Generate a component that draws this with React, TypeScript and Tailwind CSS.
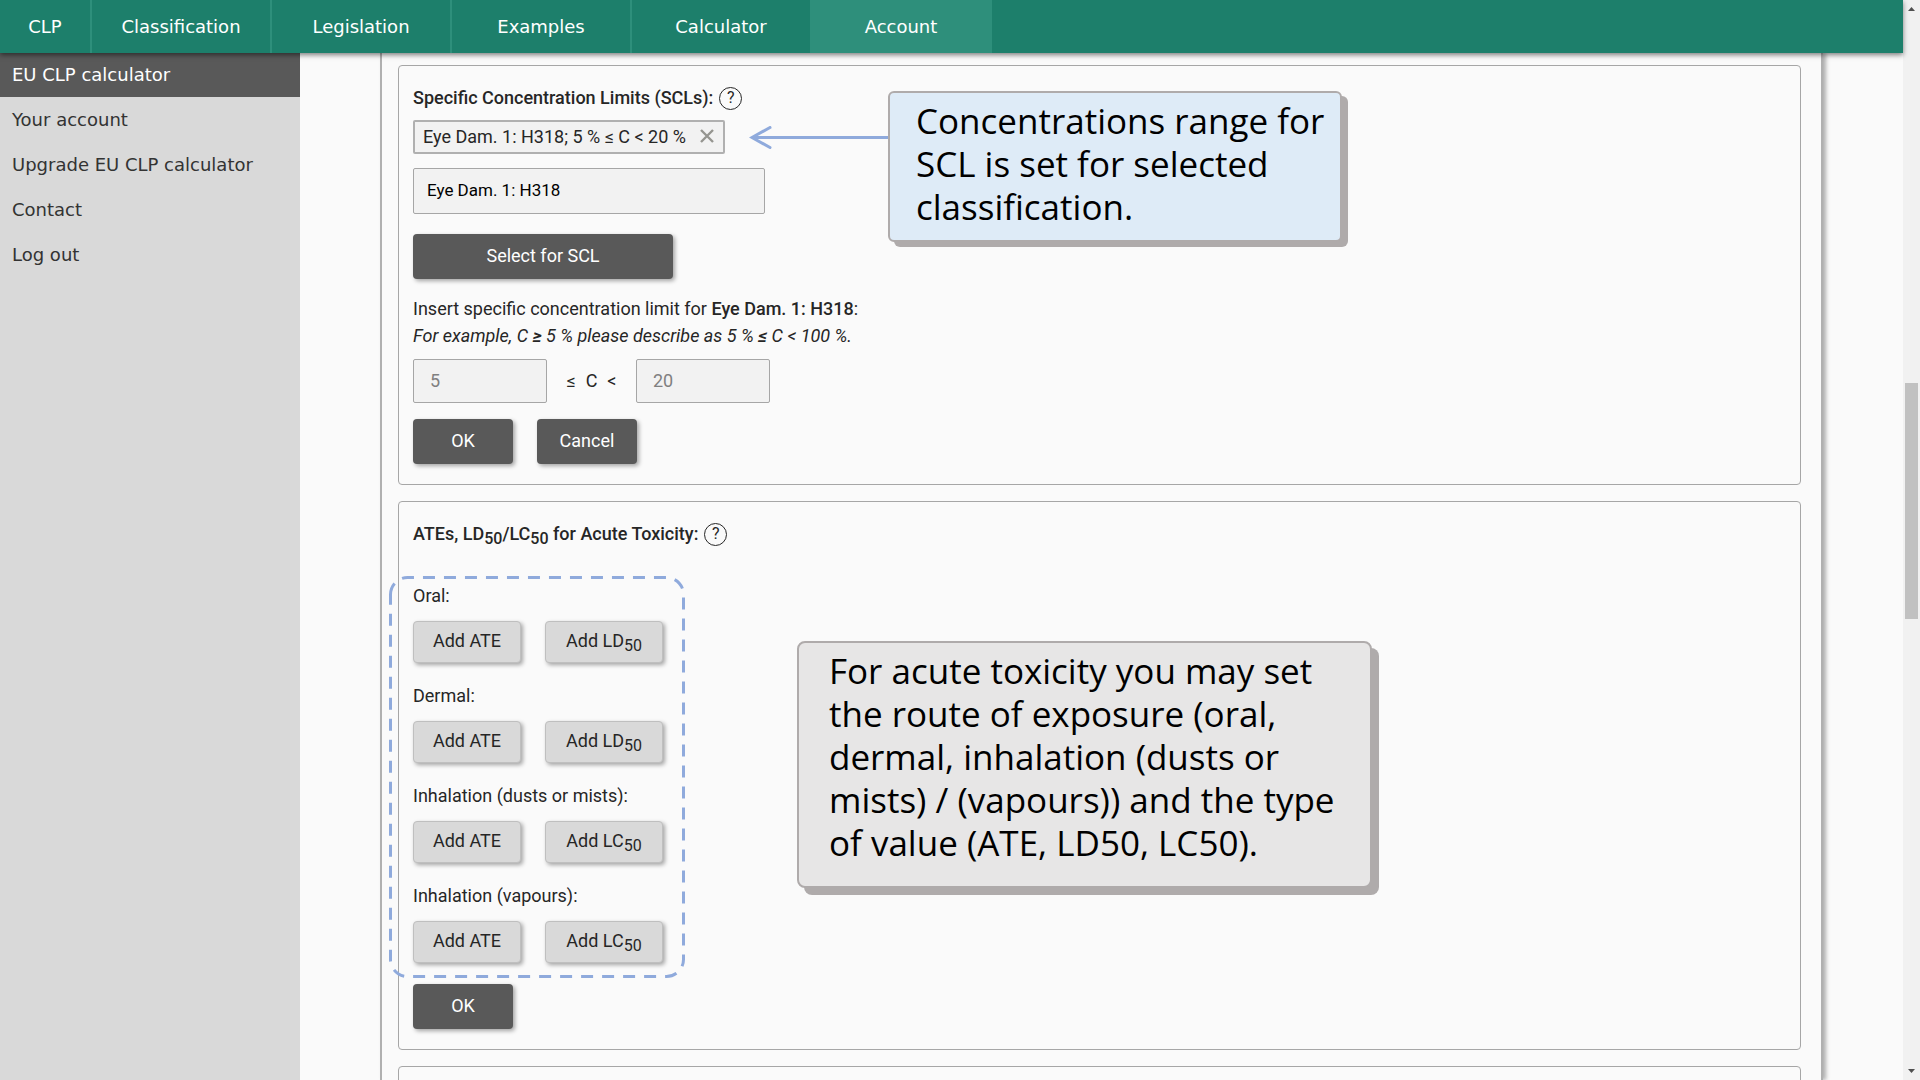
import { useState } from "react";

const navItems = ["Classification", "Legislation", "Examples", "Calculator"];

const menuItems = ["Your account", "Upgrade EU CLP calculator", "Contact", "Log out"];

const routes = [
  { name: "Oral", value: "LD" },
  { name: "Dermal", value: "LD" },
  { name: "Inhalation (dusts or mists)", value: "LC" },
  { name: "Inhalation (vapours)", value: "LC" },
];

const darkButton =
  "h-[45px] rounded bg-[#595959] pb-[2px] text-white shadow-[2px_2px_4px_rgba(0,0,0,0.35)]";
const lightButton =
  "h-[42px] rounded border border-[#bfbfbf] bg-[#d9d9d9] pb-1 shadow-[2px_2px_4px_rgba(0,0,0,0.35)]";
const field = "rounded-xs border border-[#a6a6a6] bg-[#f2f2f2]";
const callout =
  "absolute border-2 border-[#afabab] pt-1.5 font-['Trebuchet_MS','Open_Sans',sans-serif] text-[35px] leading-[43px] whitespace-nowrap text-black";

function Sub({ children }: { children: string }) {
  return <sub className="bottom-[-4px] text-base">{children}</sub>;
}

function Help() {
  return (
    <button
      type="button"
      aria-label="Help"
      className="flex size-[23px] items-center justify-center rounded-full border border-[#262626] text-base font-normal"
    >
      ?
    </button>
  );
}

function Header() {
  return (
    <header className="relative z-10 shrink-0 bg-[#1d7f6b] shadow-[0_2px_5px_rgba(0,0,0,0.5)]">
      <nav className="flex h-[53px] text-center font-['DejaVu_Sans',sans-serif] text-lg/[53px] text-white">
        <a href="#clp" className="w-[92px] border-r-2 border-[#2e8f7b]">
          CLP
        </a>
        {navItems.map((item) => (
          <a key={item} href="#nav" className="w-[180px] border-r-2 border-[#2e8f7b]">
            {item}
          </a>
        ))}
        <a href="#account" className="w-[180px] border-r-2 border-[#2e8f7b] bg-[#2e8f7b]">
          Account
        </a>
      </nav>
    </header>
  );
}

function Sidebar() {
  return (
    <aside className="w-[300px] shrink-0 bg-[#d9d9d9] font-['DejaVu_Sans',sans-serif] text-lg text-[#333333]">
      <a href="#calculator" className="flex h-11 items-center bg-[#595959] px-3 text-white">
        EU CLP calculator
      </a>
      {menuItems.map((item) => (
        <a key={item} href="#menu" className="flex h-[45px] items-center px-3">
          {item}
        </a>
      ))}
    </aside>
  );
}

function Limits() {
  const [from, setFrom] = useState("5");
  const [to, setTo] = useState("20");

  return (
    <section className="relative rounded border border-[#a6a6a6] px-3.5 py-5">
      <h2 className="flex h-6 items-center gap-1.5 font-medium">
        <span className="pb-[2px]">Specific Concentration Limits (SCLs):</span>
        <Help />
      </h2>

      <div className="mt-2.5 flex h-[34px] w-[312px] items-center justify-between rounded-xs border-2 border-[#b0b0b0] bg-[#f2f2f2] px-2 pb-[2px]">
        <span>Eye Dam. 1: H318; 5 % ≤ C &lt; 20 %</span>
        <button type="button" aria-label="Remove">
          <svg className="size-4" viewBox="0 0 16 16" fill="none" stroke="#959590" strokeWidth="2.4">
            <path d="M2 2l12 12M14 2L2 14" />
          </svg>
        </button>
      </div>

      <select
        aria-label="Classification"
        className={`${field} mt-3.5 block h-[46px] w-[352px] appearance-none px-[13px] pb-[2px] text-[17px] text-black`}
      >
        <option>Eye Dam. 1: H318</option>
      </select>

      <button type="button" className={`${darkButton} mt-5 block w-[260px]`}>
        Select for SCL
      </button>

      <p className="mt-4">
        Insert specific concentration limit for <b className="font-medium">Eye Dam. 1: H318</b>:
      </p>
      <p className="italic">
        For example, C <b>≥</b> 5 % please describe as 5 % <b>≤</b> C &lt; 100 %.
      </p>

      <div className="mt-2.5 flex items-center">
        <input
          aria-label="Lower limit"
          value={from}
          onChange={(e) => setFrom(e.target.value)}
          className={`${field} h-11 w-[134px] px-4 pb-[2px] text-[#808080]`}
        />
        <span className="flex w-[89px] justify-center gap-2.5 pb-[2px]">
          <span>≤</span>
          <span>C</span>
          <span>&lt;</span>
        </span>
        <input
          aria-label="Upper limit"
          value={to}
          onChange={(e) => setTo(e.target.value)}
          className={`${field} h-11 w-[134px] px-4 pb-[2px] text-[#808080]`}
        />
      </div>

      <div className="mt-4 flex gap-6">
        <button type="button" className={`${darkButton} w-[100px]`}>
          OK
        </button>
        <button type="button" className={`${darkButton} w-[100px]`}>
          Cancel
        </button>
      </div>

      <svg
        className="absolute top-[60px] left-[350px] h-6 w-[140px]"
        viewBox="0 0 140 24"
        fill="none"
        stroke="#8faadc"
        strokeWidth="3"
        strokeLinecap="round"
      >
        <path d="M3 11.5H140M21 1.5L3 11.5L21 21.5" />
      </svg>
      <div
        className={`${callout} top-[25px] left-[489px] h-[151px] w-[454px] rounded-md bg-[#deebf7] pl-[26px] shadow-[6px_5px_0_#afabab]`}
      >
        Concentrations range for
        <br />
        SCL is set for selected
        <br />
        classification.
      </div>
    </section>
  );
}

function AcuteToxicity() {
  return (
    <section className="relative rounded border border-[#a6a6a6] px-3.5 py-5">
      <h2 className="flex h-6 items-center gap-1.5 font-medium">
        <span className="pb-[2px]">
          ATEs, LD<Sub>50</Sub>/LC<Sub>50</Sub> for Acute Toxicity:
        </span>
        <Help />
      </h2>

      <div className="relative mt-9 flex flex-col gap-[19px]">
        {routes.map((route) => (
          <div key={route.name}>
            <p>{route.name}:</p>
            <div className="mt-3 flex gap-6">
              <button type="button" className={`${lightButton} w-[108px]`}>
                Add ATE
              </button>
              <button type="button" className={`${lightButton} w-[118px]`}>
                Add {route.value}
                <Sub>50</Sub>
              </button>
            </div>
          </div>
        ))}
        <svg
          className="pointer-events-none absolute -top-1.5 -left-6 h-[402px] w-[296px]"
          viewBox="0 0 296 402"
          fill="none"
          stroke="#8faadc"
          strokeWidth="3"
          strokeDasharray="12 9"
        >
          <path d="M1.5 18.5A17 17 0 0 1 18.5 1.5H277.5A17 17 0 0 1 294.5 18.5V383.5A17 17 0 0 1 277.5 400.5H18.5A17 17 0 0 1 1.5 383.5Z" />
        </svg>
      </div>

      <button type="button" className={`${darkButton} mt-[21px] block w-[100px]`}>
        OK
      </button>

      <div
        className={`${callout} top-[139px] left-[398px] h-[247px] w-[575px] rounded-lg bg-[#e7e6e6] pl-[30px] shadow-[7px_7px_0_#afabab]`}
      >
        For acute toxicity you may set
        <br />
        the route of exposure (oral,
        <br />
        dermal, inhalation (dusts or
        <br />
        mists) / (vapours)) and the type
        <br />
        of value (ATE, LD50, LC50).
      </div>
    </section>
  );
}

function Scrollbar() {
  return (
    <div className="flex w-[17px] shrink-0 flex-col items-center justify-between bg-[#f1f1f1] py-[7px]">
      <svg className="h-1 w-[7px]" viewBox="0 0 7 4" fill="#505050">
        <path d="M3.5 0L7 4H0z" />
      </svg>
      <div className="flex w-full flex-1 flex-col px-0.5">
        <div className="grow-[372]" />
        <div className="grow-[236] bg-[#c1c1c1]" />
        <div className="grow-[450]" />
      </div>
      <svg className="h-1 w-[7px]" viewBox="0 0 7 4" fill="#505050">
        <path d="M0 0H7L3.5 4z" />
      </svg>
    </div>
  );
}

export default function App() {
  return (
    <div className="flex h-screen overflow-hidden bg-[#fafafa] font-['Roboto',sans-serif] text-lg/[27px] text-[#262626]">
      <div className="flex min-w-0 flex-1 flex-col">
        <Header />
        <div className="flex min-h-0 flex-1">
          <Sidebar />
          <main className="mx-20 flex min-w-0 flex-1 flex-col gap-4 border-x-2 border-[#b0b0b0] pt-3 pr-5 pl-4 shadow-[3px_0_4px_rgba(0,0,0,0.3)] *:shrink-0">
            <Limits />
            <AcuteToxicity />
            <section className="h-24 rounded border border-[#a6a6a6]" />
          </main>
        </div>
      </div>
      <Scrollbar />
    </div>
  );
}
